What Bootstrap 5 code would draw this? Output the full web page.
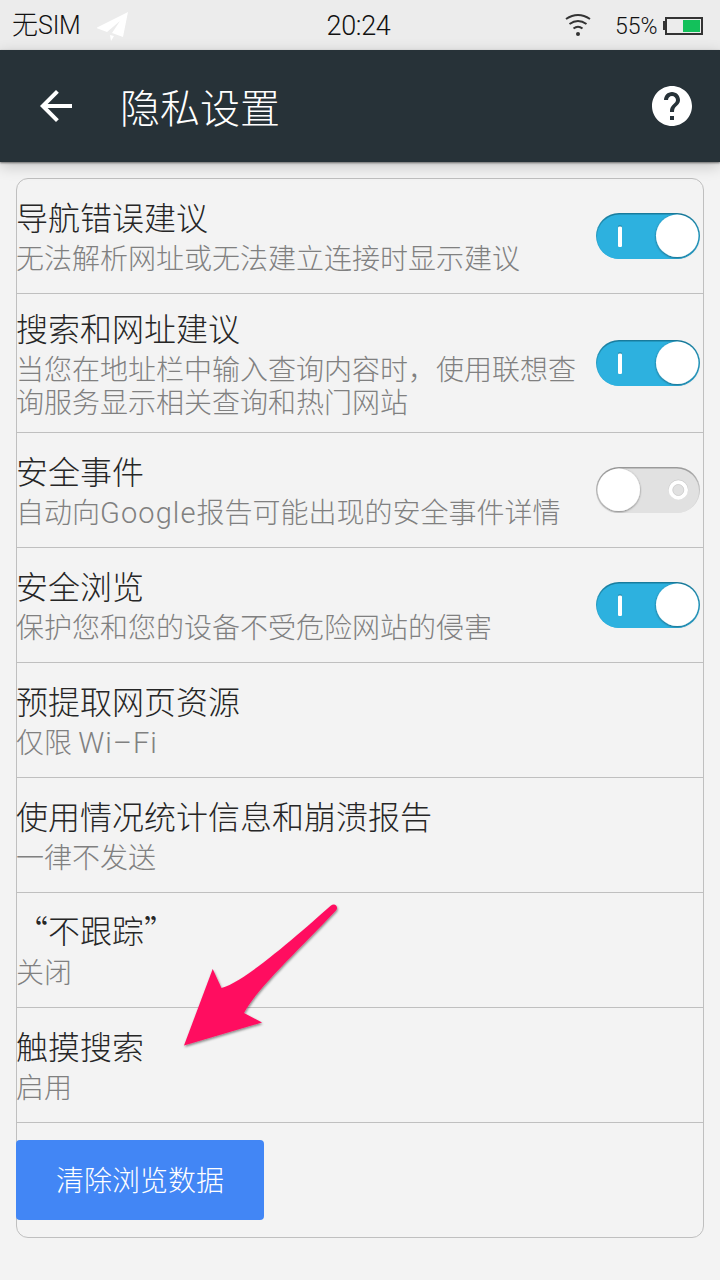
<!DOCTYPE html>
<html lang="zh-CN">
<head>
<meta charset="utf-8">
<meta name="viewport" content="width=device-width, initial-scale=1">
<title>隐私设置</title>
<link href="https://cdn.jsdelivr.net/npm/bootstrap@5.3.0/dist/css/bootstrap.min.css" rel="stylesheet">
<style>
body{background:#f3f3f3;font-family:"Noto Sans CJK SC",sans-serif;font-weight:300;color:#262626;height:1280px;overflow:hidden}
svg{display:block;flex:none}
.status{height:50px;background:#ececec;color:#111;font-size:23px;line-height:50px;padding:0 17px 0 12px;display:grid!important;grid-template-columns:1fr auto 1fr}
.clock,.sim,.pct,.latin{font-family:Roboto,"Noto Sans CJK SC",sans-serif}
.clock{font-size:27px;letter-spacing:-.35px;padding:1px 0 0 2px}
.sim{font-size:26px;width:69px;white-space:nowrap;margin-top:-1px}
.sim span{font-size:25px;letter-spacing:-.2px}
.pct{font-size:23px;width:44px;margin-left:23px;white-space:nowrap;padding-top:2px}
.latin{font-size:29px;line-height:1;letter-spacing:1.1px}
.topbar{height:112px;background:#273238;color:#fff;padding:0 24px 0 32px;box-shadow:0 1px 2px rgba(0,0,0,.5),0 4px 14px rgba(0,0,0,.2)}
.topbar h1{font-size:40px;font-weight:300;line-height:56px;margin-left:40px;margin-bottom:1px}
.panel{margin:16px 16px 0;border:1px solid #bfbfbf;border-radius:12px;height:1060px}
.entry{height:115px;border-bottom:1px solid #bfbfbf;margin-left:-1px;padding-right:3px}
.entry.tall{height:139px}
.entry:last-child{border:0;padding-top:17px}
.copy{padding-top:13px;width:566px}
.tall .copy{padding-top:9px}
.name{font-size:32px;line-height:48px}
.desc{font-size:28px;line-height:33px;color:#808080;padding-top:1px}
.quoted{margin-top:-1px;margin-bottom:1px}
.clear-btn{width:248px;height:80px;border:0;border-radius:4px;background:#4286f5;color:#fff;font-size:28px;font-weight:300;line-height:78px;padding:0 0 2px}
.pointer{left:170px;top:890px}
</style>
</head>
<body>
<svg width="0" height="0" class="position-absolute">
<defs>
<linearGradient id="rimOn" x2="0" y2="1"><stop stop-color="#187a9b"/><stop offset=".35" stop-color="#2597bb"/><stop offset="1" stop-color="#2db1df"/></linearGradient>
<linearGradient id="rimOff" x2="0" y2="1"><stop stop-color="#999"/><stop offset=".4" stop-color="#bebebe"/><stop offset="1" stop-color="#e1e1e1"/></linearGradient>
<filter id="knob" x="-20%" y="-20%" width="140%" height="140%"><feDropShadow dx="0" dy=".8" stdDeviation=".8" flood-opacity=".5"/></filter>
<filter id="soft" x="-10%" y="-10%" width="120%" height="120%"><feDropShadow dx=".7" dy="1.500" stdDeviation="1.3" flood-opacity=".45"/></filter>
<symbol id="on" viewBox="0 0 104 46"><rect width="104" height="46" rx="23" fill="url(#rimOn)"/><rect x="1" y="1.5" width="102" height="44.5" rx="22.2" fill="#2db1df"/><rect x="22" y="12.5" width="4" height="2" rx="1" fill="#1b7fa0"/><rect x="22" y="13.5" width="4" height="20.5" rx="1.2" fill="#fff"/><circle cx="81.200" cy="22.8" r="21.2" fill="#fff" filter="url(#knob)"/></symbol>
<symbol id="off" viewBox="0 0 104 46"><rect width="104" height="46" rx="23" fill="url(#rimOff)"/><rect x="1" y="1.5" width="102" height="44.5" rx="22.2" fill="#e1e1e1"/><circle cx="82.3" cy="22.400" r="8.4" fill="none" stroke="#ccc" stroke-width="3"/><circle cx="82.3" cy="23" r="7.7" fill="none" stroke="#fff" stroke-width="4"/><circle cx="82.3" cy="23" r="5.5" fill="#e1e1e1" stroke="#ccc" stroke-width=".7"/><circle cx="22.8" cy="22.8" r="21.2" fill="#fff" filter="url(#knob)"/></symbol>
</defs>
</svg>

<header>
<div class="status d-grid">
  <div class="d-flex align-items-center"><div class="sim">无<span>SIM</span></div>
    <svg class="ms-3" width="34" height="32" viewBox="0 0 34 32" fill="#fff"><path d="M-1 18 31 2 26 27 15 23 23 11 10 22Z"/><path d="M13 25 17 26 14 31Z"/></svg>
  </div>
  <span class="clock">20:24</span>
  <div class="d-flex align-items-center justify-content-end">
    <svg width="28" height="26" viewBox="0 0 28 26" fill="none" stroke="#333" stroke-width="2"><path d="M2 6Q14-2 26 6M5.5 11Q14 5 22.500 11M9.500 15.500Q14 12 18.500 15.500"/><circle cx="14" cy="21" r="2" fill="#333" stroke="none"/></svg>
    <span class="pct">55%</span>
    <svg class="ms-1" width="40" height="18" viewBox="0 0 40 18"><path d="M0 4h3v9H0z" fill="#333"/><rect x="3" y="1" width="36" height="16" fill="none" stroke="#333" stroke-width="2"/><path d="M20 3h17v12H20z" fill="#13c15b"/></svg>
  </div>
</div>
<nav class="topbar position-relative d-flex align-items-center">
  <svg width="48" height="48" viewBox="0 0 24 24" fill="#fff"><path d="M20 11H7.830l5.590-5.590L12 4l-8 8 8 8 1.410-1.410L7.830 13H20v-2z"/></svg>
  <h1>隐私设置</h1>
  <svg class="ms-auto" width="48" height="48" viewBox="0 0 24 24" fill="#fff"><path d="M12 2C6.480 2 2 6.480 2 12s4.480 10 10 10 10-4.480 10-10S17.520 2 12 2zm1 17h-2v-2h2v2zm2.070-7.750-.9.920C13.450 12.900 13 13.500 13 15h-2v-.5c0-1.100.450-2.100 1.170-2.830l1.240-1.260c.37-.36.590-.86.590-1.410 0-1.100-.9-2-2-2s-2 .9-2 2H8c0-2.210 1.790-4 4-4s4 1.790 4 4c0 .88-.36 1.680-.93 2.250z"/></svg>
</nav>
</header>

<main class="panel">
  <div class="entry d-flex justify-content-between"><div class="copy"><div class="name">导航错误建议</div><div class="desc">无法解析网址或无法建立连接时显示建议</div></div><svg class="align-self-center" width="104" height="46"><use href="#on"/></svg></div>
  <div class="entry tall d-flex justify-content-between"><div class="copy"><div class="name">搜索和网址建议</div><div class="desc">当您在地址栏中输入查询内容时，使用联想查询服务显示相关查询和热门网站</div></div><svg class="align-self-center" width="104" height="46"><use href="#on"/></svg></div>
  <div class="entry d-flex justify-content-between"><div class="copy"><div class="name">安全事件</div><div class="desc">自动向<span class="latin">Google</span>报告可能出现的安全事件详情</div></div><svg class="align-self-center" width="104" height="46"><use href="#off"/></svg></div>
  <div class="entry d-flex justify-content-between"><div class="copy"><div class="name">安全浏览</div><div class="desc">保护您和您的设备不受危险网站的侵害</div></div><svg class="align-self-center" width="104" height="46"><use href="#on"/></svg></div>
  <div class="entry"><div class="copy"><div class="name">预提取网页资源</div><div class="desc">仅限 <span class="latin">Wi–Fi</span></div></div></div>
  <div class="entry"><div class="copy"><div class="name">使用情况统计信息和崩溃报告</div><div class="desc">一律不发送</div></div></div>
  <div class="entry"><div class="copy"><div class="name quoted">“不跟踪”</div><div class="desc">关闭</div></div></div>
  <div class="entry"><div class="copy"><div class="name">触摸搜索</div><div class="desc">启用</div></div></div>
  <div class="entry"><button class="btn clear-btn" type="button">清除浏览数据</button></div>
</main>

<svg class="pointer position-absolute" width="190" height="170" viewBox="0 0 190 170"><path filter="url(#soft)" fill="#ff1060" d="M14 155.500 42.700 79 51.500 98C76 91 130 43 161 15.500 165 12.500 169 17 166 20.500 130 59 88 97 74 123L92 132.500Z"/></svg>
<script src="https://cdn.jsdelivr.net/npm/bootstrap@5.3.0/dist/js/bootstrap.bundle.min.js"></script>
</body>
</html>
